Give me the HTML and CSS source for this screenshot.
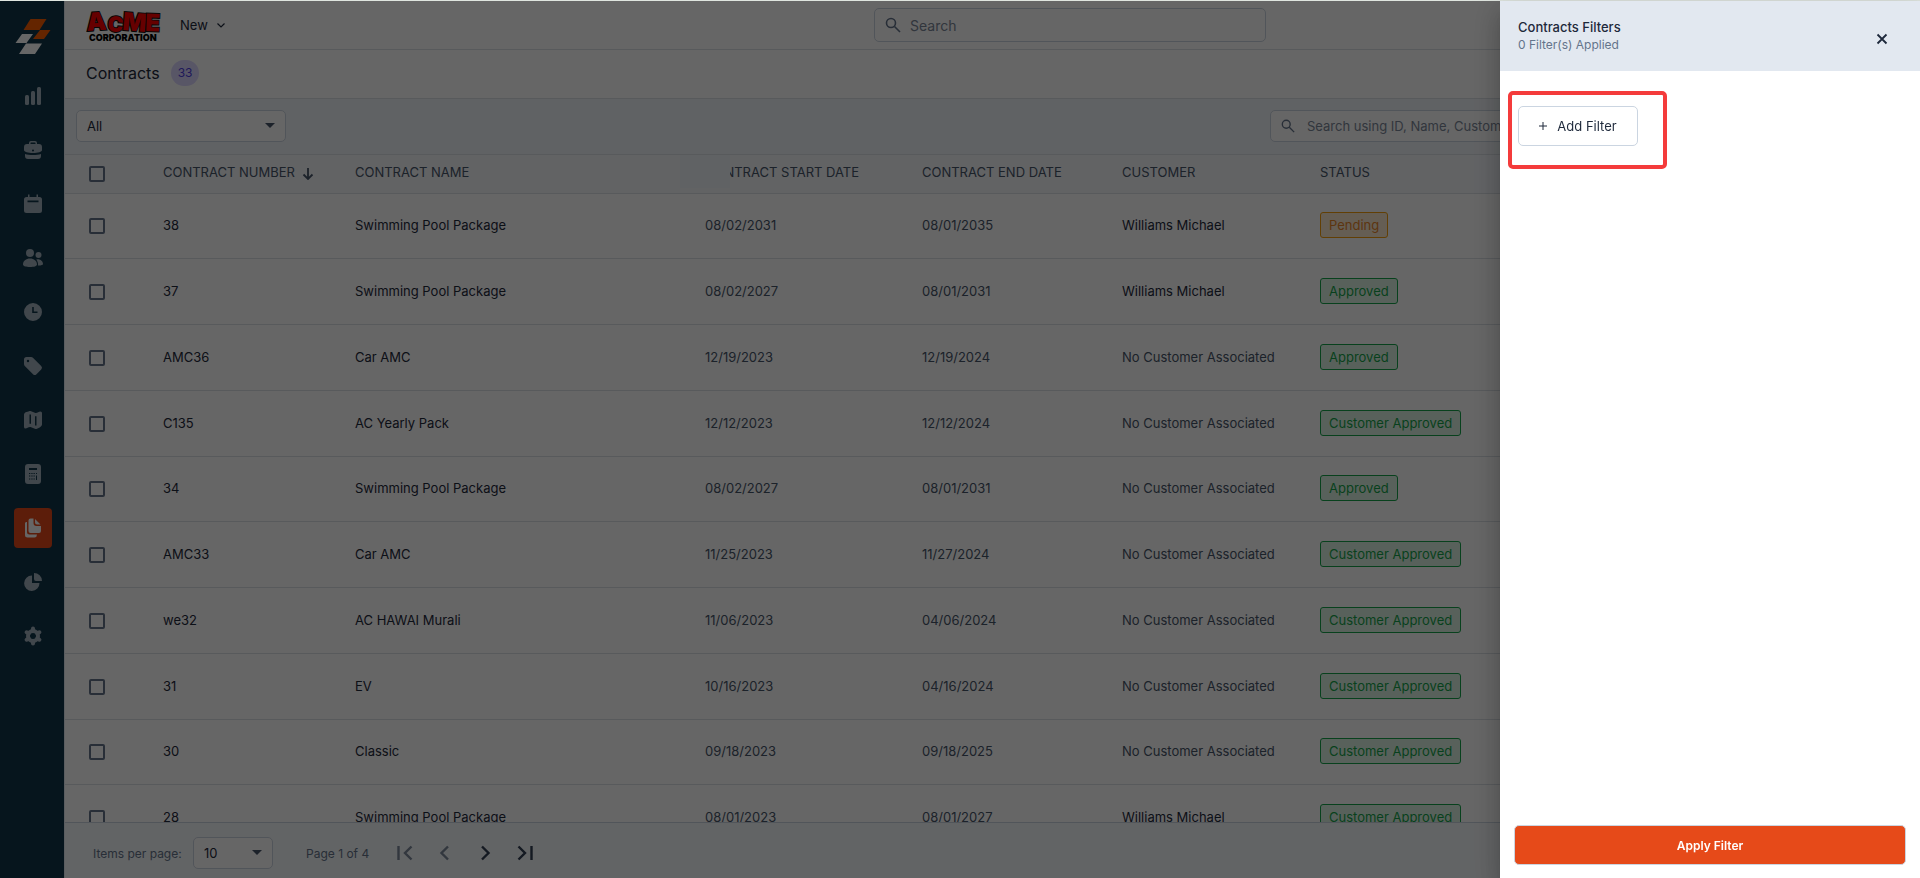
FILE: index.html
```html
<!DOCTYPE html>
<html lang="en">
<head>
  <meta charset="UTF-8" />
  <title>Contracts</title>
  <link rel="stylesheet" href="styles.css">
</head>
<body>
  <div class="app">
    <nav class="sidebar">
      <a class="brand" href="#" aria-label="Home">
        <svg width="36" height="36" viewBox="0 0 36 36">
          <path fill="#fa5c00" d="M15.500 0h16l-7 11h-16zM25 11h10.500l-6.500 9h-11z" />
          <path fill="#fff" d="M7 15h11l-6.500 9H.500zM11 24.500h16L20 35H4z" />
        </svg>
      </a>
      <a class="nav-item" href="#" aria-label="Dashboard">
        <svg width="20" height="20" viewBox="0 0 20 20"><rect x="2" y="9" width="4" height="10" rx="1.500" /><rect x="8" y="5" width="4" height="14" rx="1.500" /><rect x="14" y="1" width="4" height="18" rx="1.500" /></svg>
      </a>
      <a class="nav-item" href="#" aria-label="Jobs">
        <svg width="20" height="20" viewBox="0 0 20 20"><path fill-rule="evenodd" d="M6 4V3a2 2 0 0 1 2-2h4a2 2 0 0 1 2 2v1h2a3 3 0 0 1 3 3v3c0 2-4 3-9 3s-9-1-9-3V7a3 3 0 0 1 3-3zM7.500 4h5V3a.6.6 0 0 0-.5-.5H8a.6.6 0 0 0-.5.5zM10 9.500a1 1 0 1 0 0 2 1 1 0 0 0 0-2z" /><path d="M2 14c4 1.300 12 1.300 16 0v2a3 3 0 0 1-3 3H5a3 3 0 0 1-3-3z" /></svg>
      </a>
      <a class="nav-item" href="#" aria-label="Schedule">
        <svg width="20" height="20" viewBox="0 0 20 20"><path fill-rule="evenodd" d="M5 .500h1.500V3h7V.500H15V3h1.500A2.500 2.500 0 0 1 19 5.500v11a2.500 2.500 0 0 1-2.500 2.500h-13A2.500 2.500 0 0 1 1 16.500v-11A2.500 2.500 0 0 1 3.500 3H5zM4.500 6.500v1.800h11V6.500z" /></svg>
      </a>
      <a class="nav-item" href="#" aria-label="Customers">
        <svg width="20" height="20" viewBox="0 0 20 20"><circle cx="7" cy="5" r="4" /><circle cx="15.500" cy="7" r="3" /><path d="M0 16.500C0 13 3 10.500 7 10.500s7 2.500 7 6c0 1.700-3 2.500-7 2.500s-7-.8-7-2.500zM15 17.500c.3-2.500-.5-4.500-1.700-6 3.500-1 6.700 1.500 6.700 4.500 0 1-2 1.600-5 1.500z" /></svg>
      </a>
      <a class="nav-item" href="#" aria-label="Timesheet">
        <svg width="20" height="20" viewBox="0 0 20 20"><path fill-rule="evenodd" d="M10 1a9 9 0 1 1 0 18 9 9 0 0 1 0-18zM9.200 5v6h5.300V9.400h-3.700V5z" /></svg>
      </a>
      <a class="nav-item" href="#" aria-label="Products">
        <svg width="20" height="20" viewBox="0 0 20 20"><path fill-rule="evenodd" d="M3.500 1H8a3 3 0 0 1 2.200 1l8 8a2.500 2.500 0 0 1 0 3.500l-4.700 4.700a2.500 2.500 0 0 1-3.500 0l-8-8A3 3 0 0 1 1 8V3.500A2.500 2.500 0 0 1 3.500 1zM5 3.800a1.200 1.200 0 1 0 0 2.400 1.200 1.200 0 0 0 0-2.400z" /></svg>
      </a>
      <a class="nav-item" href="#" aria-label="Map">
        <svg width="20" height="20" viewBox="0 0 20 20"><path fill-rule="evenodd" d="M1 4.500C1 3 3 2 4.500 1.800 6 1.500 6.500.9 7.500 1.100L12.500 3c2 .2 3-1.500 5-1.500A1.500 1.500 0 0 1 19 3v11.500c0 2-4 4.500-6.500 4.500L7.500 17c-2-.3-3.500 1.500-5 1.500A1.500 1.500 0 0 1 1 17zM6.500 4.500v9.200H8V4.500zM12 6.300v9.200h1.500V6.300z" /></svg>
      </a>
      <a class="nav-item" href="#" aria-label="Estimates">
        <svg width="20" height="20" viewBox="0 0 20 20"><path fill-rule="evenodd" d="M5 0h10a3 3 0 0 1 3 3v14a3 3 0 0 1-3 3H5a3 3 0 0 1-3-3V3a3 3 0 0 1 3-3zM6 4v2h8V4zM6 9v1h1.300V9zM8.300 9v1h1.300V9zM10.500 9v1h1.300V9zM13 9v1h1V9zM6 11.500v1h1.300v-1zM8.300 11.500v1h1.300v-1zM10.500 11.500v1h1.300v-1zM13 11.500V16h1v-4.500zM6 14.500v1h1.300v-1zM8.300 14.500v1h1.300v-1zM10.500 14.500v1h1.300v-1z" /></svg>
      </a>
      <a class="nav-item active" href="#" aria-label="Contracts">
        <svg width="20" height="20" viewBox="0 0 20 20"><path d="M5.500 2.500a2 2 0 0 1 2-2h3V5a3 3 0 0 0 3 3H18v5a2 2 0 0 1-2 2H7.500a2 2 0 0 1-2-2zM12 1l5.500 5.500H14A2 2 0 0 1 12 4.500zM2 5.500A1.500 1.500 0 0 1 4 4v10a2.500 2.500 0 0 0 2.500 2.500H14a3 3 0 0 1-2.500 3H4.500A2.500 2.500 0 0 1 2 17z" /></svg>
      </a>
      <a class="nav-item" href="#" aria-label="Reports">
        <svg width="20" height="20" viewBox="0 0 20 20"><path d="M9 3.500V11h7.500A7.700 7.700 0 1 1 9 3.500zM11 1a8 8 0 0 1 8 8h-6a2 2 0 0 1-2-2z" /></svg>
      </a>
      <a class="nav-item" href="#" aria-label="Settings">
        <svg class="gear" width="20" height="20" viewBox="0 0 20 20"><circle cx="10" cy="10" r="5" /><path d="M10 5V2.600M10 17.400V15M14.300 7.500l2.100-1.200M3.600 13.700l2.100-1.200M14.300 12.500l2.100 1.200M3.600 6.300l2.100 1.200" /></svg>
      </a>
    </nav>

    <main class="main">
      <header class="topbar">
        <svg class="acme" width="76" height="34" viewBox="0 0 76 34" role="img" aria-label="ACME Corporation">
          <text class="acme-name" y="23"><tspan x="1" font-size="25" rotate="-4">A</tspan><tspan x="21" font-size="21" rotate="5">C</tspan><tspan x="36" y="22" font-size="25" rotate="5">M</tspan><tspan x="59" y="23" font-size="24" rotate="2">E</tspan></text>
          <text class="acme-sub" x="3" y="33">CORPORATION</text>
        </svg>
        <button class="new-button">New
          <svg width="10" height="10" viewBox="0 0 10 10"><path d="M1.500 3.500L5 7l3.500-3.500" fill="none" stroke="currentColor" stroke-width="1.200" /></svg>
        </button>
        <div class="search-box global-search">
          <svg width="16" height="16" viewBox="0 0 16 16"><circle cx="6" cy="6" r="4.500" /><path d="M9.500 9.500L15 15" /></svg>
          <input type="text" placeholder="Search" aria-label="Search" />
        </div>
      </header>

      <div class="title-bar">
        <h1>Contracts</h1>
        <span class="count">33</span>
      </div>

      <div class="filter-bar">
        <div class="select-box view-select">
          <select aria-label="View"><option>All</option></select>
        </div>
        <div class="search-box list-search">
          <svg width="14" height="14" viewBox="0 0 16 16"><circle cx="6" cy="6" r="4.500" /><path d="M9.500 9.500L15 15" /></svg>
          <input type="text" placeholder="Search using ID, Name, Customer Name" aria-label="Search contracts" />
        </div>
      </div>

      <div class="table-wrap">
        <table class="contracts">
          <colgroup>
            <col class="col-check" /><col class="col-number" /><col class="col-name" /><col class="col-start" /><col class="col-end" /><col class="col-customer" /><col />
          </colgroup>
          <thead>
            <tr>
              <th><input type="checkbox" aria-label="Select all" /></th>
              <th>CONTRACT NUMBER <svg width="12" height="12" viewBox="0 0 12 12"><path d="M6 0v10.500M1.500 6.500L6 11l4.500-4.500" fill="none" stroke="currentColor" stroke-width="1.800" /></svg></th>
              <th>CONTRACT NAME</th>
              <th class="start-head">CONTRACT START DATE</th>
              <th>CONTRACT END DATE</th>
              <th>CUSTOMER</th>
              <th>STATUS</th>
            </tr>
          </thead>
          <tbody>
            <tr><td><input type="checkbox" aria-label="Select 38" /></td><td>38</td><td>Swimming Pool Package</td><td class="soft">08/02/2031</td><td class="soft">08/01/2035</td><td>Williams Michael</td><td><span class="badge pending">Pending</span></td></tr>
            <tr><td><input type="checkbox" aria-label="Select 37" /></td><td>37</td><td>Swimming Pool Package</td><td class="soft">08/02/2027</td><td class="soft">08/01/2031</td><td>Williams Michael</td><td><span class="badge">Approved</span></td></tr>
            <tr><td><input type="checkbox" aria-label="Select AMC36" /></td><td>AMC36</td><td>Car AMC</td><td class="soft">12/19/2023</td><td class="soft">12/19/2024</td><td class="soft">No Customer Associated</td><td><span class="badge">Approved</span></td></tr>
            <tr><td><input type="checkbox" aria-label="Select C135" /></td><td>C135</td><td>AC Yearly Pack</td><td class="soft">12/12/2023</td><td class="soft">12/12/2024</td><td class="soft">No Customer Associated</td><td><span class="badge">Customer Approved</span></td></tr>
            <tr><td><input type="checkbox" aria-label="Select 34" /></td><td>34</td><td>Swimming Pool Package</td><td class="soft">08/02/2027</td><td class="soft">08/01/2031</td><td class="soft">No Customer Associated</td><td><span class="badge">Approved</span></td></tr>
            <tr><td><input type="checkbox" aria-label="Select AMC33" /></td><td>AMC33</td><td>Car AMC</td><td class="soft">11/25/2023</td><td class="soft">11/27/2024</td><td class="soft">No Customer Associated</td><td><span class="badge">Customer Approved</span></td></tr>
            <tr><td><input type="checkbox" aria-label="Select we32" /></td><td>we32</td><td>AC HAWAI Murali</td><td class="soft">11/06/2023</td><td class="soft">04/06/2024</td><td class="soft">No Customer Associated</td><td><span class="badge">Customer Approved</span></td></tr>
            <tr><td><input type="checkbox" aria-label="Select 31" /></td><td>31</td><td>EV</td><td class="soft">10/16/2023</td><td class="soft">04/16/2024</td><td class="soft">No Customer Associated</td><td><span class="badge">Customer Approved</span></td></tr>
            <tr><td><input type="checkbox" aria-label="Select 30" /></td><td>30</td><td>Classic</td><td class="soft">09/18/2023</td><td class="soft">09/18/2025</td><td class="soft">No Customer Associated</td><td><span class="badge">Customer Approved</span></td></tr>
            <tr><td><input type="checkbox" aria-label="Select 28" /></td><td>28</td><td>Swimming Pool Package</td><td class="soft">08/01/2023</td><td class="soft">08/01/2027</td><td>Williams Michael</td><td><span class="badge">Customer Approved</span></td></tr>
          </tbody>
        </table>
      </div>

      <footer class="pagination">
        <label for="pageSize">Items per page:</label>
        <div class="select-box size-select">
          <select id="pageSize"><option>10</option></select>
        </div>
        <span class="page-info">Page 1 of 4</span>
        <button class="page-button off" aria-label="First page"><svg width="16" height="16" viewBox="0 0 16 16"><path d="M1.500 1v14M14.500 1.500L8 8l6.500 6.500" /></svg></button>
        <button class="page-button off" aria-label="Previous page"><svg width="16" height="16" viewBox="0 0 16 16"><path d="M11 1.500L4.500 8l6.500 6.500" /></svg></button>
        <button class="page-button" aria-label="Next page"><svg width="16" height="16" viewBox="0 0 16 16"><path d="M5 1.500L11.500 8 5 14.500" /></svg></button>
        <button class="page-button" aria-label="Last page"><svg width="16" height="16" viewBox="0 0 16 16"><path d="M1.500 1.500L8 8l-6.500 6.500M14.500 1v14" /></svg></button>
      </footer>
    </main>
  </div>

  <div class="backdrop"></div>

  <aside class="drawer">
    <div class="drawer-header">
      <div>
        <h2>Contracts Filters</h2>
        <p>0 Filter(s) Applied</p>
      </div>
      <button class="close-button" aria-label="Close">
        <svg width="12" height="12" viewBox="0 0 12 12"><path d="M1.500 1.500l9 9M10.500 1.500l-9 9" fill="none" stroke="currentColor" stroke-width="1.800" /></svg>
      </button>
    </div>
    <div class="drawer-body">
      <div class="highlight">
        <button class="add-button">
          <svg width="8" height="8" viewBox="0 0 8 8"><path d="M4 0v8M0 4h8" stroke="currentColor" stroke-width="1" /></svg>
          Add Filter
        </button>
      </div>
    </div>
    <div class="drawer-footer">
      <button class="apply-button">Apply Filter</button>
    </div>
  </aside>
</body>
</html>
```

FILE: styles.css
```css
* {
  box-sizing: border-box;
}

body {
  margin: 0;
  font-family: Inter, "Liberation Sans", sans-serif;
  font-size: 13px;
  color: #1e293b;
  background: #fff;
  overflow: hidden;
}

button,
input,
select {
  font: inherit;
  color: inherit;
}

button {
  cursor: pointer;
}

.app {
  display: flex;
  height: 100vh;
  border-top: 1px solid #dfe5df;
}

/* sidebar */
.sidebar {
  display: flex;
  flex-direction: column;
  align-items: center;
  gap: 14px;
  width: 64px;
  padding: 18px 0 0 2px;
  background: #0f3549;
}

.brand {
  height: 43px;
}

.nav-item {
  display: flex;
  align-items: center;
  justify-content: center;
  width: 38px;
  height: 40px;
  border-radius: 4px;
  fill: #a3b1bd;
}

.nav-item.active {
  background: #e64a19;
  fill: #fff;
}

.gear {
  fill: none;
  stroke: #a3b1bd;
  stroke-width: 4;
  stroke-linecap: round;
}

.main {
  flex: 1;
  min-width: 0;
  display: flex;
  flex-direction: column;
  border-left: 1px solid #e2e8f0;
}

/* top bar */
.topbar {
  display: flex;
  align-items: center;
  height: 49px;
  padding-left: 21px;
  border-bottom: 1px solid #dbe0e6;
}

.acme-name {
  font-weight: 900;
  fill: #ff0000;
  stroke: #111;
  stroke-width: 2px;
  paint-order: stroke;
}

.acme-sub {
  font-size: 9px;
  font-weight: 900;
  fill: #000;
}

.new-button {
  display: flex;
  align-items: center;
  gap: 8px;
  width: 80px;
  margin-left: 12px;
  border: none;
  background: none;
}

.search-box {
  display: flex;
  align-items: center;
  border: 1px solid #cbd5e1;
  border-radius: 5px;
  background: #fff;
}

.search-box svg {
  fill: none;
  stroke: #64748b;
  stroke-width: 1.600;
}

.search-box input {
  flex: 1;
  border: none;
  outline: none;
  padding: 0;
  background: none;
}

.search-box input::placeholder {
  color: #7c8798;
}

.global-search {
  width: 392px;
  height: 34px;
  margin-left: 620px;
  padding-left: 10px;
  gap: 9px;
  font-size: 14px;
}

.title-bar {
  display: flex;
  align-items: center;
  gap: 11px;
  height: 49px;
  padding: 0 0 2px 21px;
  border-bottom: 1px solid #dbe0e6;
}

.title-bar h1 {
  margin: 0;
  font-size: 16px;
  font-weight: 400;
}

.count {
  padding: 0 7px;
  font-size: 12px;
  line-height: 26px;
  border-radius: 13px;
  background: #ddd6fe;
  color: #4f3fe0;
}

.filter-bar {
  display: flex;
  align-items: center;
  justify-content: space-between;
  height: 56px;
  padding: 0 280px 2px 11px;
  background: #f1f5f9;
  border-bottom: 1px solid #dbe0e6;
}

.select-box {
  position: relative;
}

.select-box select {
  appearance: none;
  width: 100%;
  height: 32px;
  padding: 0 10px;
  border: 1px solid #cbd5e1;
  border-radius: 5px;
  background: #fff;
}

.select-box::after {
  content: "";
  position: absolute;
  top: 13px;
  right: 11px;
  border: 5px solid transparent;
  border-top-color: #475569;
  border-bottom: none;
}

.view-select {
  width: 210px;
}

.list-search {
  width: 370px;
  height: 32px;
  padding-left: 10px;
  gap: 12px;
}

/* table */
.table-wrap {
  flex: 1;
  min-height: 0;
  overflow: hidden;
}

.contracts {
  width: 100%;
  table-layout: fixed;
  border-collapse: separate;
  border-spacing: 0;
}

.col-check {
  width: 98px;
}

.col-number {
  width: 192px;
}

.col-name {
  width: 350px;
}

.col-start {
  width: 217px;
}

.col-end {
  width: 200px;
}

.col-customer {
  width: 198px;
}

.contracts th {
  position: relative;
  height: 39px;
  padding: 0 0 4px;
  text-align: left;
  font-weight: 400;
  color: #475569;
  background: #f4f7fb;
  border-bottom: 1px solid #dbe0e6;
}

.contracts th svg {
  margin-left: 3px;
  vertical-align: -3px;
}

.start-head::before {
  content: "";
  position: absolute;
  top: -1px;
  left: -25px;
  width: 50px;
  height: 34px;
  background: #f1f5f9;
}

.contracts td {
  height: 66px;
  padding: 0 0 2px;
  border-bottom: 1px solid #dbe0e6;
}

.contracts tr:nth-child(4n + 1) td {
  height: 65px;
}

.contracts th:first-child,
.contracts td:first-child {
  padding: 0 0 0 24px;
}

.contracts input {
  appearance: none;
  display: block;
  width: 16px;
  height: 16px;
  margin: 0;
  border: 2px solid #64748b;
  border-radius: 2px;
}

.contracts .soft {
  color: #475569;
}

.badge {
  display: inline-block;
  padding: 0 8px;
  line-height: 24px;
  border: 1px solid #16a34a;
  border-radius: 3px;
  background: #dcf2e4;
  color: #16a34a;
}

.badge.pending {
  border-color: #f59e0b;
  background: #fdebd3;
  color: #e8862a;
}

/* pagination */
.pagination {
  display: flex;
  align-items: center;
  height: 56px;
  padding: 5px 0 0 28px;
  font-size: 12px;
  color: #64748b;
  background: #f6f9fc;
  border-top: 1px solid #cbd5e1;
}

.pagination label {
  width: 100px;
}

.size-select {
  width: 80px;
  font-size: 13px;
  color: #1e293b;
}

.page-info {
  width: 79px;
  margin-left: 33px;
}

.page-button {
  display: flex;
  align-items: center;
  justify-content: center;
  width: 40px;
  padding: 0;
  border: none;
  background: none;
}

.page-button svg {
  fill: none;
  stroke: #334155;
  stroke-width: 2.400;
}

.page-button.off svg {
  stroke: #7d8a9c;
}

.backdrop {
  position: fixed;
  inset: 1px 0 0;
  background: rgba(0, 0, 0, 0.6);
}

/* filter drawer */
.drawer {
  position: fixed;
  top: 1px;
  right: 0;
  bottom: 0;
  display: flex;
  flex-direction: column;
  width: 420px;
  background: #fff;
  box-shadow: 0 8px 10px -5px rgba(0, 0, 0, 0.2), 0 16px 24px 2px rgba(0, 0, 0, 0.14), 0 6px 30px 5px rgba(0, 0, 0, 0.12);
}

.drawer-header {
  display: flex;
  align-items: center;
  justify-content: space-between;
  height: 70px;
  padding: 0 32px 0 18px;
  background: #e2e8f0;
}

.drawer-header h2,
.drawer-header p {
  margin: 0;
  font-size: 13px;
  line-height: 18px;
}

.drawer-header h2 {
  font-weight: 500;
}

.drawer-header p {
  font-size: 12px;
  color: #64748b;
}

.close-button {
  display: flex;
  margin-top: 6px;
  padding: 0;
  border: none;
  background: none;
}

.drawer-body {
  flex: 1;
  padding: 20px 8px;
}

.highlight {
  width: 159px;
  height: 78px;
  padding: 11px 6px;
  border: 4px solid #f43b3b;
  border-radius: 5px;
}

.add-button {
  display: flex;
  align-items: center;
  justify-content: center;
  gap: 10px;
  width: 120px;
  height: 40px;
  border: 1px solid #cbd5e1;
  border-radius: 5px;
  background: #fff;
}

.drawer-footer {
  padding: 0 14px 13px;
}

.apply-button {
  display: block;
  width: 100%;
  height: 40px;
  border: 1px solid #cbd5e1;
  border-radius: 5px;
  background: #e64a19;
  color: #fff;
  font-size: 12px;
  font-weight: 600;
}
```
